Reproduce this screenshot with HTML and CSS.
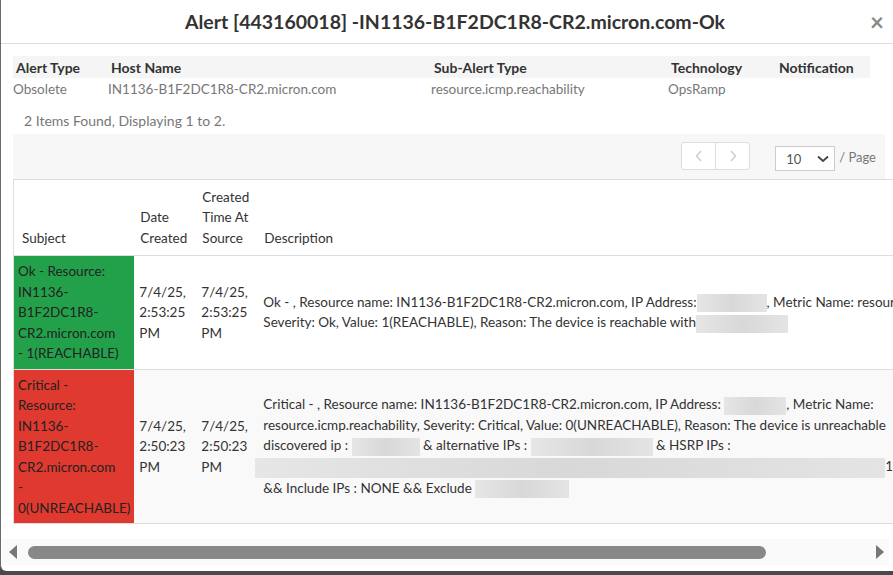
FILE: index.html
```html
<!DOCTYPE html>
<html lang="en">
  <head>
    <meta charset="UTF-8" />
    <meta name="viewport" content="width=device-width, initial-scale=1.0" />
    <title>Alert details</title>
    <link rel="stylesheet" href="styles.css">
  </head>
  <body>
    <div class="modal">
      <header class="modal-header">
        <h1>Alert [443160018] -IN1136-B1F2DC1R8-CR2.micron.com-Ok</h1>
        <span class="close">&times;</span>
      </header>

      <div class="modal-body">
        <table class="info">
          <tr class="info-head">
            <th class="c1">Alert Type</th>
            <th class="c2">Host Name</th>
            <th class="c3">Sub-Alert Type</th>
            <th class="c4">Technology</th>
            <th class="c5">Notification</th>
          </tr>
          <tr class="info-values">
            <td>Obsolete</td>
            <td>IN1136-B1F2DC1R8-CR2.micron.com</td>
            <td>resource.icmp.reachability</td>
            <td>OpsRamp</td>
            <td></td>
          </tr>
        </table>

        <p class="count">2 Items Found, Displaying 1 to 2.</p>

        <div class="toolbar">
          <div class="pager">
            <span class="pager-btn">
              <svg width="10" height="14" viewBox="0 0 10 14"><path d="M7 2 L2.5 7 L7 12" fill="none" stroke="#ccc" stroke-width="1.4"/></svg>
            </span>
            <span class="pager-btn">
              <svg width="10" height="14" viewBox="0 0 10 14"><path d="M3 2 L7.5 7 L3 12" fill="none" stroke="#ccc" stroke-width="1.4"/></svg>
            </span>
          </div>
          <div class="page-size">
            <span>10</span>
            <svg width="12" height="8" viewBox="0 0 12 8"><path d="M1 1.5 L6 6 L11 1.5" fill="none" stroke="#444" stroke-width="1.8"/></svg>
          </div>
          <span class="per-page">/ Page</span>
        </div>

        <div class="table-wrap">
          <table class="alerts">
            <thead>
              <tr>
                <th class="col-subject">Subject</th>
                <th class="col-date">Date<br />Created</th>
                <th class="col-date">Created<br />Time At<br />Source</th>
                <th>Description</th>
              </tr>
            </thead>
            <tbody>
              <tr>
                <td class="subject ok">Ok - Resource:<br />IN1136-<br />B1F2DC1R8-<br />CR2.micron.com<br />- 1(REACHABLE)</td>
                <td>7/4/25,<br />2:53:25<br />PM</td>
                <td>7/4/25,<br />2:53:25<br />PM</td>
                <td class="desc">
                  Ok - , Resource name: IN1136-B1F2DC1R8-CR2.micron.com, IP Address:<span class="redact" style="width: 70px"></span>, Metric Name: resource.icmp.reachability,<br />
                  Severity: Ok, Value: 1(REACHABLE), Reason: The device is reachable with<span class="redact" style="width: 92px"></span>
                </td>
              </tr>
              <tr class="striped">
                <td class="subject critical">Critical -<br />Resource:<br />IN1136-<br />B1F2DC1R8-<br />CR2.micron.com<br />-<br />0(UNREACHABLE)</td>
                <td>7/4/25,<br />2:50:23<br />PM</td>
                <td>7/4/25,<br />2:50:23<br />PM</td>
                <td class="desc">
                  Critical - , Resource name: IN1136-B1F2DC1R8-CR2.micron.com, IP Address: <span class="redact" style="width: 62px"></span>, Metric Name:<br />
                  resource.icmp.reachability, Severity: Critical, Value: 0(UNREACHABLE), Reason: The device is unreachable<br />
                  discovered ip : <span class="redact" style="width: 68px"></span> &amp; alternative IPs : <span class="redact" style="width: 122px"></span> &amp; HSRP IPs :<br />
                  <span class="redact wide" style="width: 630px"></span>10<br />
                  &amp;&amp; Include IPs : NONE &amp;&amp; Exclude <span class="redact" style="width: 94px"></span>
                </td>
              </tr>
            </tbody>
          </table>
        </div>
      </div>

      <div class="hscroll">
        <svg width="10" height="14" viewBox="0 0 10 14"><path d="M9 0 L1 7 L9 14 Z" fill="#777"/></svg>
        <div class="track"><div class="thumb"></div></div>
        <svg width="10" height="14" viewBox="0 0 10 14"><path d="M1 0 L9 7 L1 14 Z" fill="#777"/></svg>
      </div>
    </div>
  </body>
</html>
```

FILE: styles.css
```css
body {
  margin: 0;
  padding: 0;
  background-color: #4a4a4a;
  font-family: Lato, "Open Sans", sans-serif;
  font-size: 14px;
  color: #333;
  overflow: hidden;
}
.modal {
  width: 908px;
  height: 571px;
  background-color: #fff;
  border-left: 1px solid #6a6a6a;
  border-bottom-left-radius: 6px;
  position: relative;
  overflow: hidden;
  display: flex;
  flex-direction: column;
}
.modal-header {
  height: 43px;
  border-bottom: 1px solid #ddd;
  display: flex;
  align-items: center;
  justify-content: center;
  position: relative;
}
h1 {
  margin: 0;
  font-size: 19.5px;
  font-weight: 700;
  color: #333;
}
.close {
  position: absolute;
  right: 25px;
  top: 7px;
  font-size: 24px;
  font-weight: 700;
  color: #888;
}
.modal-body {
  padding: 12px 0 0 12px;
  flex: 1;
}
.info {
  border-collapse: collapse;
  width: 857px;
}
.info th {
  background-color: #f5f5f5;
  text-align: left;
  font-weight: 700;
  height: 22px;
  padding: 0 0 0 3px;
}
.info td {
  color: #777;
  font-size: 13.5px;
  height: 21px;
  padding: 0;
  vertical-align: middle;
}
.info .c1 { width: 92px; }
.info .c2 { width: 320px; }
.info .c3 { width: 234px; }
.info .c4 { width: 105px; }
.count {
  margin: 12px 0 0 11px;
  color: #777;
  font-size: 14px;
  line-height: 20px;
}
.toolbar {
  margin-top: 3px;
  width: 872px;
  height: 45px;
  background-color: #f7f7f7;
  display: flex;
  align-items: center;
  justify-content: flex-end;
  padding-right: 9px;
  box-sizing: border-box;
}
.pager {
  display: flex;
  border: 1px solid #ddd;
  border-radius: 3px;
  background-color: #fff;
  margin-top: -2px;
}
.pager-btn {
  width: 33px;
  height: 26px;
  display: flex;
  align-items: center;
  justify-content: center;
}
.pager-btn + .pager-btn {
  border-left: 1px solid #ddd;
}
.page-size {
  margin-left: 25px;
  width: 60px;
  height: 25px;
  border: 1px solid #ccc;
  background-color: #fff;
  display: flex;
  align-items: center;
  justify-content: space-between;
  padding: 2px 5px 0 10px;
  box-sizing: border-box;
  font-size: 13px;
  color: #555;
  margin-top: 3px;
}
.per-page {
  margin-left: 4px;
  font-size: 13px;
  color: #777;
}
.table-wrap {
  overflow: hidden;
  width: 900px;
}
.alerts {
  border-collapse: collapse;
  border-left: 1px solid #ddd;
  width: 1100px;
  font-size: 13.5px;
  line-height: 20.5px;
}
.alerts thead tr {
  border-top: 1px solid #ddd;
  border-bottom: 1px solid #ddd;
}
.alerts th {
  text-align: left;
  font-weight: 400;
  vertical-align: bottom;
  height: 76px;
  padding: 0 6px 7px 6px;
  box-sizing: border-box;
}
.alerts th.col-subject {
  width: 118px;
  padding-left: 8px;
}
.alerts th.col-date {
  width: 62px;
}
.alerts td {
  vertical-align: middle;
  padding: 5px 5px;
  border-bottom: 1px solid #ddd;
}
.alerts tr.striped td {
  background-color: #f9f9f9;
}
.alerts td.subject {
  padding: 5px 4px;
  color: #222;
}
.alerts tr td.ok {
  background-color: #22a14a;
}
.alerts tr td.critical {
  background-color: #e0392f;
}
.desc {
  white-space: nowrap;
}
.redact {
  display: inline-block;
  height: 18px;
  vertical-align: middle;
  background: linear-gradient(90deg, #e6e6e6, #d8d8d8 50%, #e4e4e4);
}
.redact.wide {
  height: 20px;
  margin-left: -8px;
}
.hscroll {
  height: 26px;
  margin: 0 0 6px 1px;
  background-color: #fafafa;
  display: flex;
  align-items: center;
  padding: 0 4px 0 6px;
  width: 887px;
  box-sizing: border-box;
}
.track {
  flex: 1;
  margin: 0 6px;
}
.thumb {
  width: 738px;
  height: 13px;
  border-radius: 7px;
  background-color: #888;
  margin-left: 4px;
}
```
